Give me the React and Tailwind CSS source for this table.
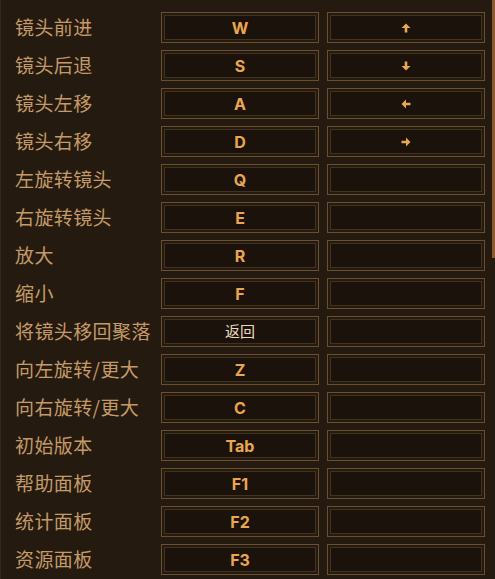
import React from "react";

const rows = [
  { label: "镜头前进", key: "W", alt: "up" },
  { label: "镜头后退", key: "S", alt: "down" },
  { label: "镜头左移", key: "A", alt: "left" },
  { label: "镜头右移", key: "D", alt: "right" },
  { label: "左旋转镜头", key: "Q" },
  { label: "右旋转镜头", key: "E" },
  { label: "放大", key: "R" },
  { label: "缩小", key: "F" },
  { label: "将镜头移回聚落", key: "返回", cjk: true },
  { label: "向左旋转/更大", key: "Z" },
  { label: "向右旋转/更大", key: "C" },
  { label: "初始版本", key: "Tab" },
  { label: "帮助面板", key: "F1" },
  { label: "统计面板", key: "F2" },
  { label: "资源面板", key: "F3" },
];

const rot = { up: 0, right: 90, down: 180, left: 270 };

function Arrow({ dir }) {
  return (
    <svg width="10" height="10" viewBox="0 0 10 10" style={{ transform: `rotate(${rot[dir]}deg)` }}>
      <path d="M5 0.5 L9.5 5 L6.3 5 L6.3 9.5 L3.7 9.5 L3.7 5 L0.5 5 Z" fill="#e8a750" />
    </svg>
  );
}

function KeyBox({ children }) {
  return (
    <div className="h-[31px] border border-[#6a5030] p-[2px]">
      <div className="h-full border border-[#43321d] bg-[#1b130b] flex items-center justify-center">
        {children}
      </div>
    </div>
  );
}

export default function App() {
  return (
    <div className="relative w-[495px] h-[579px] overflow-hidden bg-[#241a0f] border-l border-[#33261a]">
      <div className="pl-[14px] pt-[12px] flex flex-col gap-[7px]">
        {rows.map((r) => (
          <div key={r.label} className="grid grid-cols-[138px_158px_158px] gap-x-[8px] items-center">
            <div
              className="text-[19px] leading-none text-[#c49a68] tracking-[0.4px] whitespace-nowrap -mt-[2px]"
              style={{ fontFamily: '"Noto Sans CJK SC", sans-serif' }}
            >
              {r.label}
            </div>
            <KeyBox>
              {r.cjk ? (
                <span
                  className="text-[15px] text-[#eadbc0]"
                  style={{ fontFamily: '"Noto Sans CJK SC", sans-serif' }}
                >
                  {r.key}
                </span>
              ) : (
                <span
                  className="text-[16px] font-bold text-[#eaa64f]"
                  style={{ fontFamily: '"Inter", "Noto Sans", sans-serif' }}
                >
                  {r.key}
                </span>
              )}
            </KeyBox>
            <KeyBox>{r.alt ? <Arrow dir={r.alt} /> : null}</KeyBox>
          </div>
        ))}
      </div>
      <div className="absolute right-0 top-0 w-[3px] h-[258px] bg-[#8c5a2c]" />
    </div>
  );
}
